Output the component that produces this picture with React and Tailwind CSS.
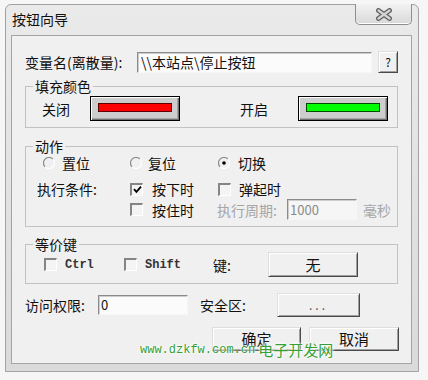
import React from 'react';

const raised =
  'bg-[#f0f0f0] border border-t-[#dedede] border-l-[#dedede] border-r-[#4a4a4a] border-b-[#4a4a4a] shadow-[inset_1px_1px_0_#ffffff,inset_-1px_-1px_0_#a0a0a0] flex items-center justify-center';
const sunken =
  'border border-t-[#8a8a8a] border-l-[#8a8a8a] border-r-[#f6f6f6] border-b-[#f6f6f6] shadow-[inset_1px_1px_0_#cdcdcd] flex items-center';

function Radio({ checked }) {
  return (
    <svg width="12" height="12" viewBox="0 0 12 12" className="shrink-0">
      <path d="M9.9 2.1 A5.5 5.5 0 0 0 2.1 9.9" stroke="#8a8a8a" strokeWidth="1.2" fill="none" />
      <path d="M9.9 2.1 A5.5 5.5 0 0 1 2.1 9.9" stroke="#ffffff" strokeWidth="1.2" fill="none" />
      {checked && <circle cx="6" cy="6" r="1.8" fill="#000" />}
    </svg>
  );
}

function Check({ checked }) {
  return (
    <span className="shrink-0 w-[13px] h-[13px] border-t-2 border-l-2 border-b border-r border-t-[#858585] border-l-[#858585] border-b-white border-r-white bg-[#f4f4f4] flex items-center justify-center">
      {checked && (
        <svg width="9" height="9" viewBox="0 0 9 9">
          <path d="M1 4.2 L3.4 6.8 L8 1.6" stroke="#000" strokeWidth="1.8" fill="none" />
        </svg>
      )}
    </span>
  );
}

function Swatch({ bar }) {
  return (
    <div className="w-[90px] h-[25px] border border-black bg-[#cdcdcd] shadow-[inset_1px_1px_0_#ffffff,inset_-1px_-1px_0_#6e6e6e,inset_-2px_-2px_0_#a4a4a4] flex items-center justify-center">
      <div className={`w-[74px] h-[9px] -mt-[2px] ${bar}`} />
    </div>
  );
}

function Group({ title, className, children }) {
  return (
    <fieldset className={`border border-[#c2c2c2] ${className}`}>
      <legend className="ml-[7px] px-[2px] text-[14px] leading-[16px]">{title}</legend>
      {children}
    </fieldset>
  );
}

export default function App() {
  return (
    <div className="w-[428px] h-[380px] bg-[#f6f6f6] pt-[4px] pl-[5px] relative overflow-hidden text-[14px] leading-[16px] text-[#111] font-['Noto_Sans_CJK_SC','Liberation_Sans',sans-serif]">
      <div className="w-[414px] h-[368px] rounded-t-[6px] border border-[#a2a2a2] bg-gradient-to-b from-[#eaeaea] to-[#dadada] flex flex-col pl-[5px] pr-[6px] pb-[7px]">
        {/* title bar */}
        <div className="h-[30px] flex items-start justify-between">
          <span className="mt-[6px] ml-[1px]">按钮向导</span>
          <div className="w-[57px] h-[21px] -mt-[1px] rounded-b-[5px] border border-t-0 border-[#8e8e8e] bg-gradient-to-b from-[#f2f2f2] to-[#d9d9d9] shadow-[inset_0_-1px_0_#ffffff] flex items-center justify-center">
            <svg width="18" height="13" viewBox="0 0 18 13">
              <path d="M3.5 2.5 L14.5 10.5 M14.5 2.5 L3.5 10.5" stroke="#5e5e5e" strokeWidth="4.8" strokeLinecap="round" />
              <path d="M3.5 2.5 L14.5 10.5 M14.5 2.5 L3.5 10.5" stroke="#d4d4d4" strokeWidth="2.4" strokeLinecap="round" />
            </svg>
          </div>
        </div>

        {/* client area */}
        <div className="flex-1 border border-[#a4a4a4] bg-[#f0f0f0] px-[13px] flex flex-col">
          <div className="mt-[15px] h-[22px] flex items-center">
            <span className="w-[112px] shrink-0">变量名(离散量):</span>
            <div className={`${sunken} w-[235px] h-[21px] bg-[#fbfbfb] pl-[3px]`}>{'\\\\本站点\\停止按钮'}</div>
            <button className={`${raised} ml-[6px] w-[20px] h-[22px] text-[12px]`}>?</button>
          </div>

          <Group title="填充颜色" className="mt-[5px] pt-[2px] pb-[6px]">
            <div className="flex items-center pl-[16px] h-[25px]">
              <span className="w-[48px] shrink-0">关闭</span>
              <Swatch bar="bg-[#ff0000] border border-[#5a0000]" />
              <span className="ml-[60px] w-[58px] shrink-0">开启</span>
              <Swatch bar="bg-[#00ff00] border border-[#004a00]" />
            </div>
          </Group>

          <Group title="动作" className="mt-[10px] pb-[6px]">
            <div className="h-[18px] flex items-center pl-[17px]">
              <label className="w-[87px] flex items-center gap-[7px]"><Radio />置位</label>
              <label className="w-[88px] flex items-center gap-[6px]"><Radio />复位</label>
              <label className="flex items-center gap-[8px]"><Radio checked />切换</label>
            </div>
            <div className="mt-[8px] h-[18px] flex items-center pl-[11px]">
              <span className="w-[93px] shrink-0">执行条件:</span>
              <label className="w-[88px] flex items-center gap-[9px]"><Check checked />按下时</label>
              <label className="flex items-center gap-[8px]"><Check />弹起时</label>
            </div>
            <div className="mt-[1px] h-[21px] flex items-center pl-[104px]">
              <label className="w-[87px] flex items-center gap-[9px]"><Check />按住时</label>
              <span className="w-[70px] shrink-0 text-[#a6a6a6]">执行周期:</span>
              <div className={`${sunken} w-[70px] h-[21px] bg-[#f6f6f6] pl-[2px] text-[13px] text-[#8a8a8a]`}>1000</div>
              <span className="ml-[6px] text-[#a6a6a6]">毫秒</span>
            </div>
          </Group>

          <Group title="等价键" className="mt-[9px] pb-[6px]">
            <div className="h-[25px] flex items-center pl-[18px]">
              <label className="w-[80px] flex items-center gap-[8px]">
                <Check />
                <span className="font-['Liberation_Mono',monospace] font-bold text-[12px] text-[#333]">Ctrl</span>
              </label>
              <label className="w-[89px] flex items-center gap-[8px]">
                <Check />
                <span className="font-['Liberation_Mono',monospace] font-bold text-[12px] text-[#333]">Shift</span>
              </label>
              <span className="w-[55px] shrink-0">键:</span>
              <button className={`${raised} w-[90px] h-[25px] text-[15px]`}>无</button>
            </div>
          </Group>

          <div className="mt-[9px] h-[24px] flex items-center">
            <span className="w-[73px] shrink-0">访问权限:</span>
            <div className={`${sunken} w-[90px] h-[20px] bg-[#fbfbfb] pl-[2px] text-[13px]`}>0</div>
            <span className="ml-[12px] w-[77px] shrink-0">安全区:</span>
            <button className={`${raised} w-[83px] h-[24px] text-[12px] tracking-[3px] text-[#555]`}>...</button>
          </div>

          <div className="mt-[10px] flex justify-end gap-[8px] -mr-[1px]">
            <button className={`${raised} w-[89px] h-[24px] text-[15px]`}>确定</button>
            <button className={`${raised} w-[90px] h-[24px] text-[15px]`}>取消</button>
          </div>
        </div>
      </div>

      {/* watermark, lies over the buttons */}
      <div className="absolute left-[140px] top-[342px] flex items-center gap-[3px] text-[#35a035] [text-shadow:0_0_2px_#fff,0_0_3px_#fff,0_0_4px_#fff]">
        <span className="font-['Liberation_Mono',monospace] text-[12px] leading-[14px]">www.dzkfw.com.cn</span>
        <span className="text-[15px] leading-[16px]">电子开发网</span>
      </div>
    </div>
  );
}
